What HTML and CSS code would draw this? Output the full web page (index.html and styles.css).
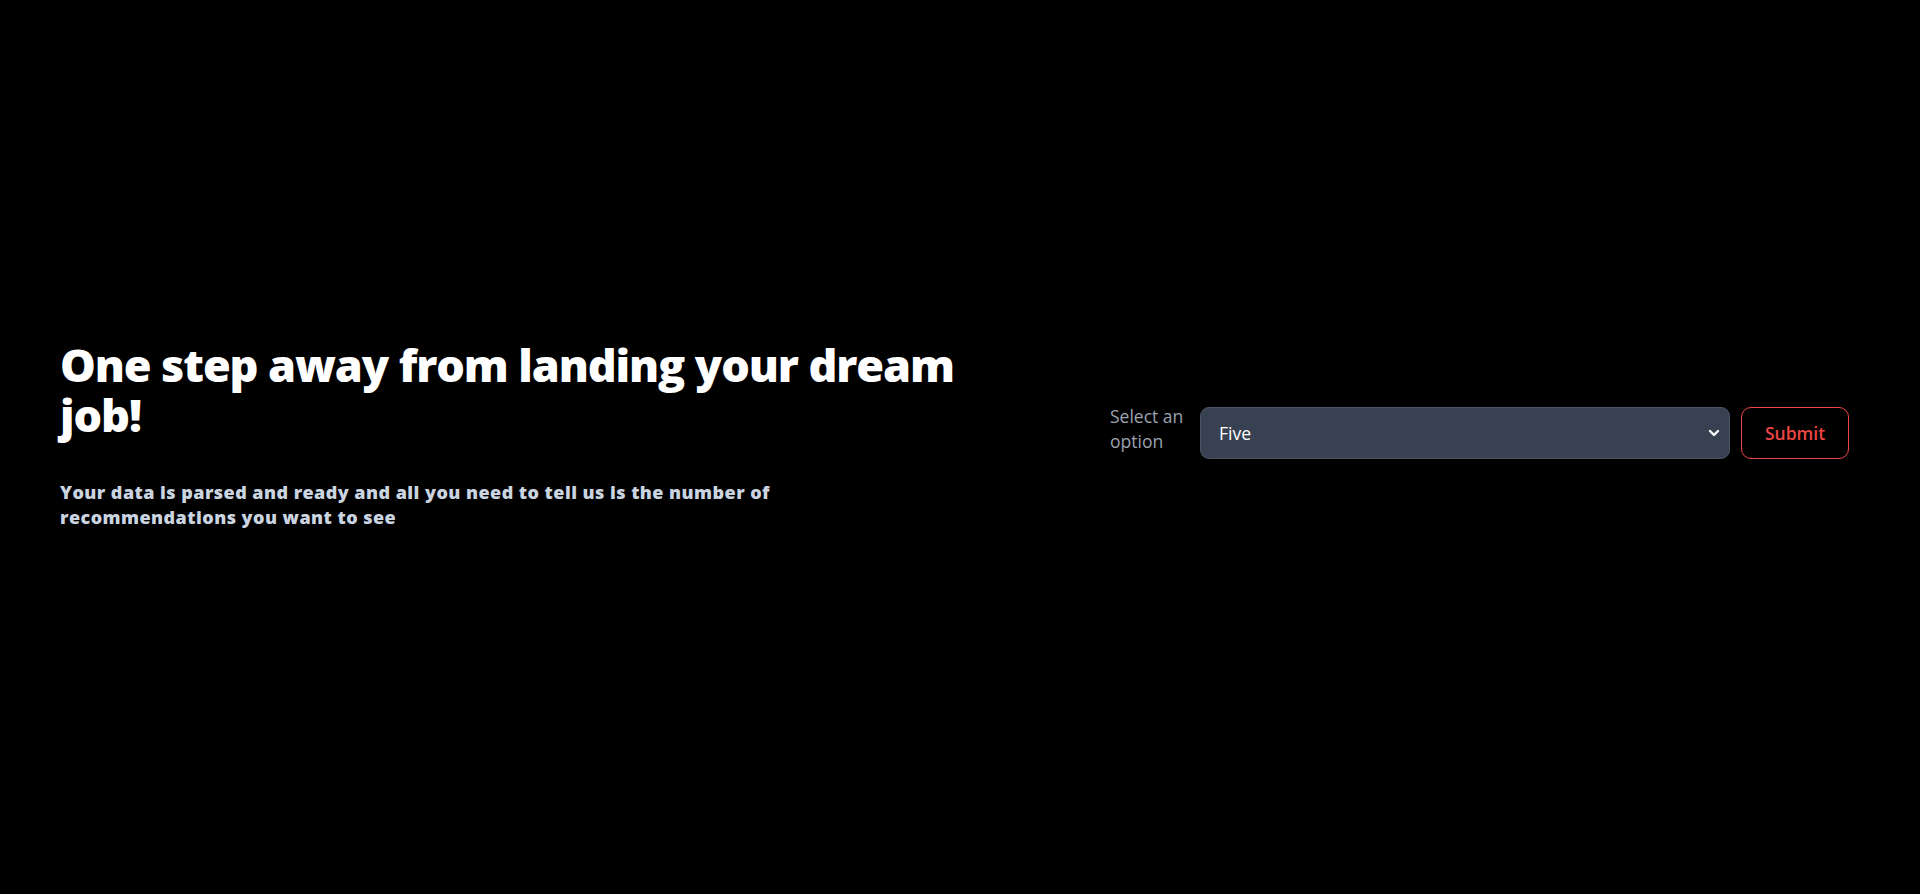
FILE: index.html
```html
<!DOCTYPE html>
<html lang="en">
<head>
<meta charset="utf-8">
<title>Recommendations</title>
<link rel="stylesheet" href="styles.css">
</head>
<body>
<main class="page">
  <section class="intro">
    <h1 class="title">One step away from landing your dream job!</h1>
    <p class="lead">Your data is parsed and ready and all you need to tell us is the number of recommendations you want to see</p>
  </section>
  <form class="picker">
    <label class="picker-label" for="count">Select an option</label>
    <div class="select-wrap">
      <select id="count" class="select">
        <option>One</option>
        <option>Three</option>
        <option selected>Five</option>
        <option>Ten</option>
      </select>
      <svg class="chevron" viewBox="0 0 20 20" width="20" height="20" aria-hidden="true">
        <path d="M6 8l4 4 4-4" fill="none" stroke="#ffffff" stroke-width="2.4" stroke-linecap="round" stroke-linejoin="round"/>
      </svg>
    </div>
    <button type="button" class="submit">Submit</button>
  </form>
</main>
</body>
</html>
```

FILE: styles.css
```css
html, body {
  margin: 0;
  padding: 0;
  background: #000000;
  height: 100%;
}

body {
  font-family: "Open Sans", "Noto Sans", "Liberation Sans", sans-serif;
  color: #ffffff;
}

.page {
  box-sizing: border-box;
  min-height: 894px;
  display: flex;
  align-items: center;
  justify-content: space-between;
  padding: 0 71px 24px 60px;
}

.intro {
  width: 960px;
}

.title {
  margin: 0;
  font-size: 45px;
  line-height: 50px;
  font-weight: 800;
  color: #ffffff;
  letter-spacing: -1.1px;
}

.lead {
  margin: 40px 0 0;
  max-width: 770px;
  font-size: 18px;
  line-height: 25px;
  font-weight: 800;
  color: #cbd5e1;
  letter-spacing: 0.45px;
}

.picker {
  width: 739px;
  display: flex;
  align-items: center;
  padding-bottom: 4px;
}

.picker-label {
  width: 82px;
  margin-right: 8px;
  margin-bottom: 8px;
  font-size: 17.5px;
  line-height: 25px;
  font-weight: 500;
  color: #9ca3af;
}

.select-wrap {
  position: relative;
  flex: 1;
  margin-right: 11px;
}

.select {
  appearance: none;
  -webkit-appearance: none;
  box-sizing: border-box;
  width: 100%;
  height: 52px;
  padding: 0 40px 0 18px;
  background: #374151;
  border: 1px solid #4b5563;
  border-radius: 9px;
  color: #ffffff;
  font-family: inherit;
  font-size: 17.5px;
  outline: none;
}

.chevron {
  position: absolute;
  right: 6px;
  top: 16px;
  pointer-events: none;
}

.submit {
  box-sizing: border-box;
  width: 108px;
  height: 52px;
  background: transparent;
  border: 1px solid #ef4444;
  border-radius: 10px;
  color: #ef4444;
  font-family: inherit;
  font-size: 17.5px;
  font-weight: 600;
  cursor: pointer;
}
```
